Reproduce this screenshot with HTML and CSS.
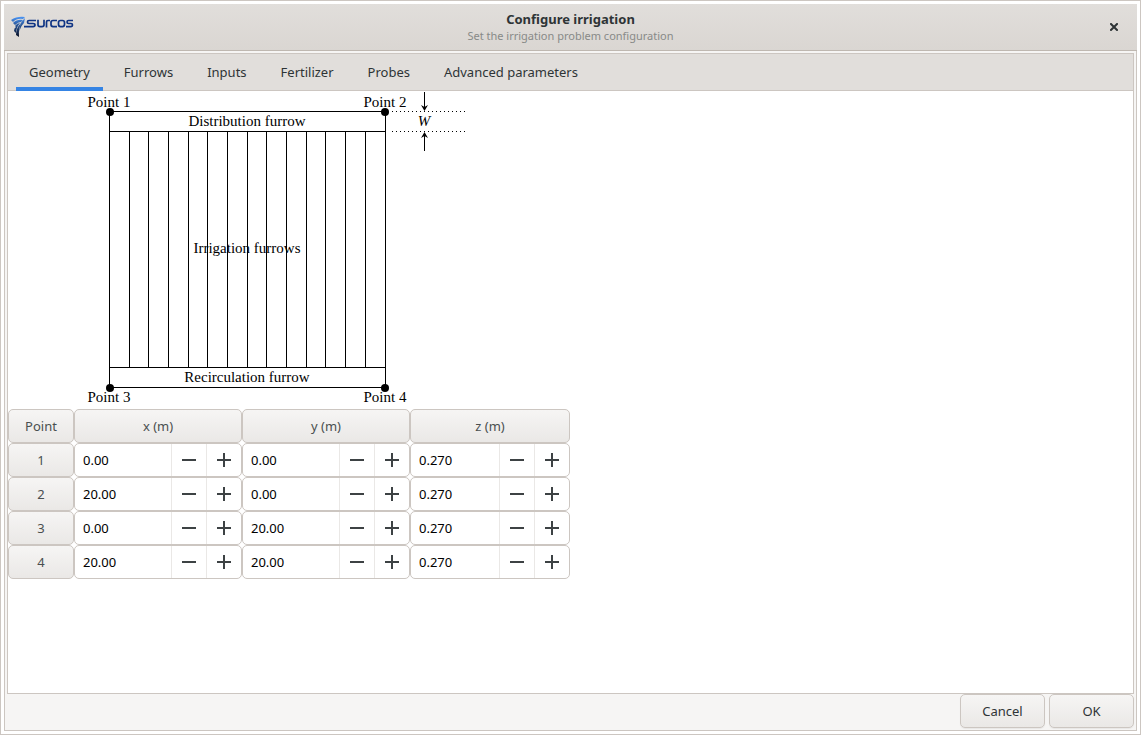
FILE: index.html
```
<!DOCTYPE html>
<html lang="en">
<head>
<meta charset="utf-8">
<title>Configure irrigation</title>
<link rel="stylesheet" href="styles.css">
</head>
<body>
<div class="window">
  <header class="titlebar">
    <svg class="logo" viewBox="0 0 64 24" width="64" height="24" role="img" aria-label="Surcos">
      <defs>
        <linearGradient id="blade" gradientUnits="userSpaceOnUse" x1="0" y1="2" x2="0" y2="22">
          <stop offset="0" stop-color="#4a94f4"/>
          <stop offset="0.45" stop-color="#26508f"/>
          <stop offset="1" stop-color="#080e20"/>
        </linearGradient>
      </defs>
      <g fill="url(#blade)">
        <path d="M1 5Q7 1 15 2L13 4Q7 3 3 7Z"/>
        <path d="M3 8Q7 4 13 5L11 7Q8 7 5 10Z"/>
        <path d="M5 11Q7 8 10 8Q6 13 6 18L4 16Q4 13 6 12Z"/>
        <path d="M11 8L13 5Q8 12 9 22L6 20Q6 13 11 8Z"/>
        <path d="M14 4L15 3L14 8Q10 12 9.500 17Q9 9 14 4Z"/>
      </g>
      <g fill="none" stroke="#0f3484" stroke-width="1.700">
        <path d="M26 5.500H19Q17.500 5.500 17.500 7T19 8.500H23Q25 8.500 25 10T23 11.600H14"/>
        <path d="M28 4.700V10Q28 11.600 30 11.600H32Q34 11.600 34 10V4.700"/>
        <path d="M36.500 12.400V7Q36.500 5.500 38 5.500H40"/>
        <path d="M47 5.500H43Q41 5.500 41 7.500V9.600Q41 11.600 43 11.600H47"/>
        <rect x="48.500" y="5.500" width="6" height="6.100" rx="2"/>
        <path d="M63 5.500H58.500Q57 5.500 57 7T58.500 8.500H61Q62.500 8.500 62.500 10T61 11.600H56"/>
      </g>
    </svg>
    <div class="titles">
      <h1 class="title">Configure irrigation</h1>
      <p class="subtitle">Set the irrigation problem configuration</p>
    </div>
    <button class="close" type="button" aria-label="Close">
      <svg viewBox="0 0 8 8" width="8" height="8"><path d="M1 1L7 7M7 1L1 7" stroke="#2e3436" stroke-width="2" stroke-linecap="square"/></svg>
    </button>
  </header>
  <main class="body">
    <section class="notebook">
      <div class="tabs" role="tablist">
        <button class="tab active" type="button" role="tab" aria-selected="true">Geometry</button>
        <button class="tab" type="button" role="tab">Furrows</button>
        <button class="tab" type="button" role="tab">Inputs</button>
        <button class="tab" type="button" role="tab">Fertilizer</button>
        <button class="tab" type="button" role="tab">Probes</button>
        <button class="tab" type="button" role="tab">Advanced parameters</button>
      </div>
      <div class="page">
        <svg class="diagram" viewBox="0 0 562 318" width="562" height="318" role="img" aria-label="Furrow geometry">
          <g class="lines">
            <path d="M101 20H378M101 40H378M101 276H378M101 296H378"/>
            <path d="M101.500 20V296M377.500 20V296"/>
            <path d="M121.500 40V276M140.500 40V276M160.500 40V276M180.500 40V276M199.500 40V276M219.500 40V276M239.500 40V276M258.500 40V276M278.500 40V276M298.500 40V276M317.500 40V276M337.500 40V276M357.500 40V276"/>
            <path class="dotted" d="M381 20H457M381 40H457"/>
            <path d="M416.500 1V19M416.500 42V60"/>
          </g>
          <path d="M413 14L416.500 16L420 14L416.500 20ZM413 47L416.500 45L420 47L416.500 41Z"/>
          <circle cx="102" cy="21" r="4"/><circle cx="377" cy="21" r="4"/>
          <circle cx="102" cy="297" r="4"/><circle cx="377" cy="297" r="4"/>
          <g class="labels">
            <text x="101" y="16">Point 1</text>
            <text x="377" y="16">Point 2</text>
            <text x="101" y="311">Point 3</text>
            <text x="377" y="311">Point 4</text>
            <text x="239" y="35">Distribution furrow</text>
            <text x="239" y="162">Irrigation furrows</text>
            <text x="239" y="291">Recirculation furrow</text>
            <text class="var" x="416" y="35">W</text>
          </g>
        </svg>
        <table class="grid">
          <colgroup><col class="c-point"><col class="c-wide"><col class="c-wide"><col class="c-z"></colgroup>
          <thead>
            <tr><th><button class="cell" type="button">Point</button></th><th><button class="cell" type="button">x (m)</button></th><th><button class="cell" type="button">y (m)</button></th><th><button class="cell" type="button">z (m)</button></th></tr>
          </thead>
          <tbody id="rows"></tbody>
        </table>
      </div>
    </section>
    <footer class="actions">
      <button class="action" type="button">Cancel</button>
      <button class="action" type="button">OK</button>
    </footer>
  </main>
</div>
<script src="main.js"></script>
</body>
</html>
```
FILE: styles.css
```
* { box-sizing: border-box; }
body {
  margin: 0;
  background: #fff;
  color: #2e3436;
  font: 13px/18px "Noto Sans", sans-serif;
}
button, input { font: inherit; color: inherit; margin: 0; padding: 0; border: 0; background: none; }
svg { display: block; }
.window {
  min-height: 100vh;
  display: flex;
  flex-direction: column;
  padding: 3px;
  border: 1px solid #ccc6c1;
}
.titlebar {
  display: grid;
  grid-template-columns: 1fr auto 1fr;
  align-items: center;
  height: 47px;
  padding: 0 6px;
  border-bottom: 1px solid #bfb8b1;
  background: linear-gradient(#e1dedb, #dad6d2);
}
.titles { text-align: center; padding-bottom: 2px; }
.title { margin: 0; font-size: 13px; line-height: 18px; font-weight: 700; }
.subtitle { margin: 0; font-size: 11px; line-height: 15px; color: #888a88; }
.close { justify-self: end; padding: 13px; }
.body {
  flex: 1;
  display: flex;
  flex-direction: column;
  padding: 2px;
  border: 1px solid #ccc6c1;
  border-top: 0;
  background: #f6f5f4;
}
.notebook { flex: 1; display: flex; flex-direction: column; border: 1px solid #ccc6c1; background: #fff; }
.tabs {
  display: flex;
  gap: 8px;
  height: 37px;
  padding: 0 8px;
  background: #e1dedb;
  border-bottom: 1px solid #ccc6c1;
}
.tab { height: 37px; padding: 0 13px; border-bottom: 4px solid transparent; border-top: 2px solid transparent; }
.tab.active { border-bottom-color: #3584e4; }
.page { flex: 1; }
.lines { stroke: #000; stroke-width: 1; fill: none; shape-rendering: crispEdges; }
.dotted { stroke-dasharray: 1 3; stroke-dashoffset: 1; }
.labels { font: 15px "Liberation Serif", serif; text-anchor: middle; }
.var { font-style: italic; }
.grid { table-layout: fixed; width: 562px; border-collapse: collapse; }
.c-point { width: 66px; }
.c-wide { width: 168px; }
.c-z { width: 160px; }
.grid th, .grid td { padding: 0; font-weight: 400; }
.cell, .spin, .action { height: 34px; border: 1px solid #ccc6c1; border-radius: 5px; }
.cell, .action { background: linear-gradient(#f6f5f4, #eae8e6); }
.cell { display: block; width: 100%; color: #4a4f50; }
.spin { display: flex; background: #fff; overflow: hidden; }
.spin input { flex: 1; min-width: 0; padding: 0 8px; color: #000; outline: 0; }
.step { display: grid; place-items: center; width: 35px; border-left: 1px solid #eae8e6; }
.actions { display: flex; justify-content: flex-end; gap: 4px; }
.action { width: 85px; box-shadow: 0 1px 1px rgba(0, 0, 0, 0.06); }
```
FILE: main.js
```
const points = [
  ["0.00", "0.00", "0.270"],
  ["20.00", "0.00", "0.270"],
  ["0.00", "20.00", "0.270"],
  ["20.00", "20.00", "0.270"],
];
const axes = ["x", "y", "z"];

const icon = (d) =>
  `<svg viewBox="0 0 14 14" width="14" height="14"><path d="${d}" fill="#3d4244"/></svg>`;

const spin = (value, label) => `<td><div class="spin">
  <input type="text" inputmode="decimal" value="${value}" aria-label="${label}">
  <button class="step" type="button" aria-label="Decrease ${label}">${icon("M0 6H14V8H0Z")}</button>
  <button class="step" type="button" aria-label="Increase ${label}">${icon("M0 6H6V0H8V6H14V8H8V14H6V8H0Z")}</button>
</div></td>`;

document.getElementById("rows").innerHTML = points
  .map((values, i) => {
    const cells = values.map((v, j) => spin(v, `${axes[j]} of point ${i + 1}`)).join("");
    return `<tr><th><button class="cell" type="button">${i + 1}</button></th>${cells}</tr>`;
  })
  .join("");
```
